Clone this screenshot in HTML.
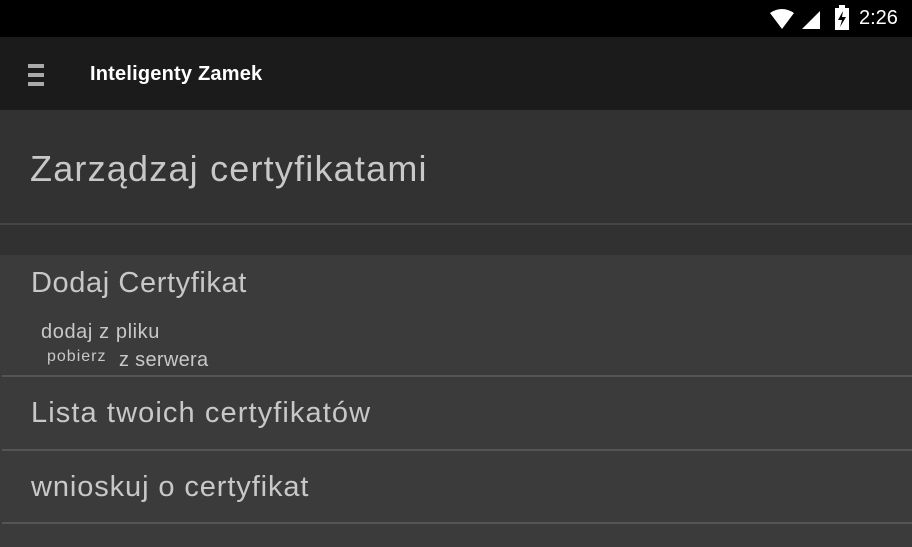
<!DOCTYPE html><html><head><style>
body{margin:0;width:912px;height:547px;background:#313131;font-family:"Liberation Sans",sans-serif;position:relative;overflow:hidden;color:#ccc}
div{position:absolute}
.t{white-space:nowrap}
</style></head><body>
<div style="left:0;top:0;width:912px;height:37px;background:#000"></div>
<svg style="position:absolute;left:768px;top:7px" width="60" height="24"><path d="M2 6 Q14 -2 26 6 L14 22Z" fill="#fff"/><path d="M34 22 L52 4 L52 22Z" fill="#fff"/></svg>
<svg style="position:absolute;left:834px;top:5px" width="16" height="26"><rect x="5" y="0" width="6" height="3" fill="#fff"/><rect x="1" y="3" width="14" height="22" fill="#fff"/><path d="M9 6 L4 15 L8 15 L6 22 L12 12 L8 12Z" fill="#000"/></svg>
<div class="t" style="left:859px;top:7px;font-size:20px;color:#fff">2:26</div>
<div style="left:0;top:37px;width:912px;height:73px;background:#1b1b1b"></div>
<div style="left:28px;top:64px;width:16px;height:4px;background:#aaa"></div>
<div style="left:28px;top:73px;width:16px;height:4px;background:#aaa"></div>
<div style="left:28px;top:82px;width:16px;height:4px;background:#aaa"></div>
<div class="t" style="left:90px;top:63px;font-size:20px;color:#fff;font-weight:bold;letter-spacing:0.2px">Inteligenty Zamek</div>
<div style="left:0;top:110px;width:912px;height:113px;background:#323232"></div>
<div class="t" style="left:30px;top:148px;font-size:36px;color:#c8c8c8;letter-spacing:1.2px">Zarządzaj certyfikatami</div>
<div style="left:0;top:223px;width:912px;height:2px;background:#454545"></div>
<div style="left:0;top:255px;width:912px;height:292px;background:#3b3b3b"></div>
<div class="t" style="left:31px;top:267px;font-size:29px;color:#c8c8c8;letter-spacing:0.6px">Dodaj Certyfikat</div>
<div class="t" style="left:41px;top:321px;font-size:20px;color:#c8c8c8;letter-spacing:0.6px">dodaj z pliku</div>
<div class="t" style="left:47px;top:348px;font-size:16px;color:#c8c8c8;letter-spacing:1px">pobierz</div>
<div class="t" style="left:119px;top:349px;font-size:20px;color:#c8c8c8;letter-spacing:0.3px">z serwera</div>
<div style="left:2px;top:375px;width:910px;height:2px;background:#555"></div>
<div class="t" style="left:31px;top:397px;font-size:29px;color:#c8c8c8;letter-spacing:1.1px">Lista twoich certyfikatów</div>
<div style="left:2px;top:449px;width:910px;height:2px;background:#555"></div>
<div class="t" style="left:31px;top:471px;font-size:29px;color:#c8c8c8;letter-spacing:0.9px">wnioskuj o certyfikat</div>
<div style="left:2px;top:522px;width:910px;height:2px;background:#555"></div>
</body></html>
